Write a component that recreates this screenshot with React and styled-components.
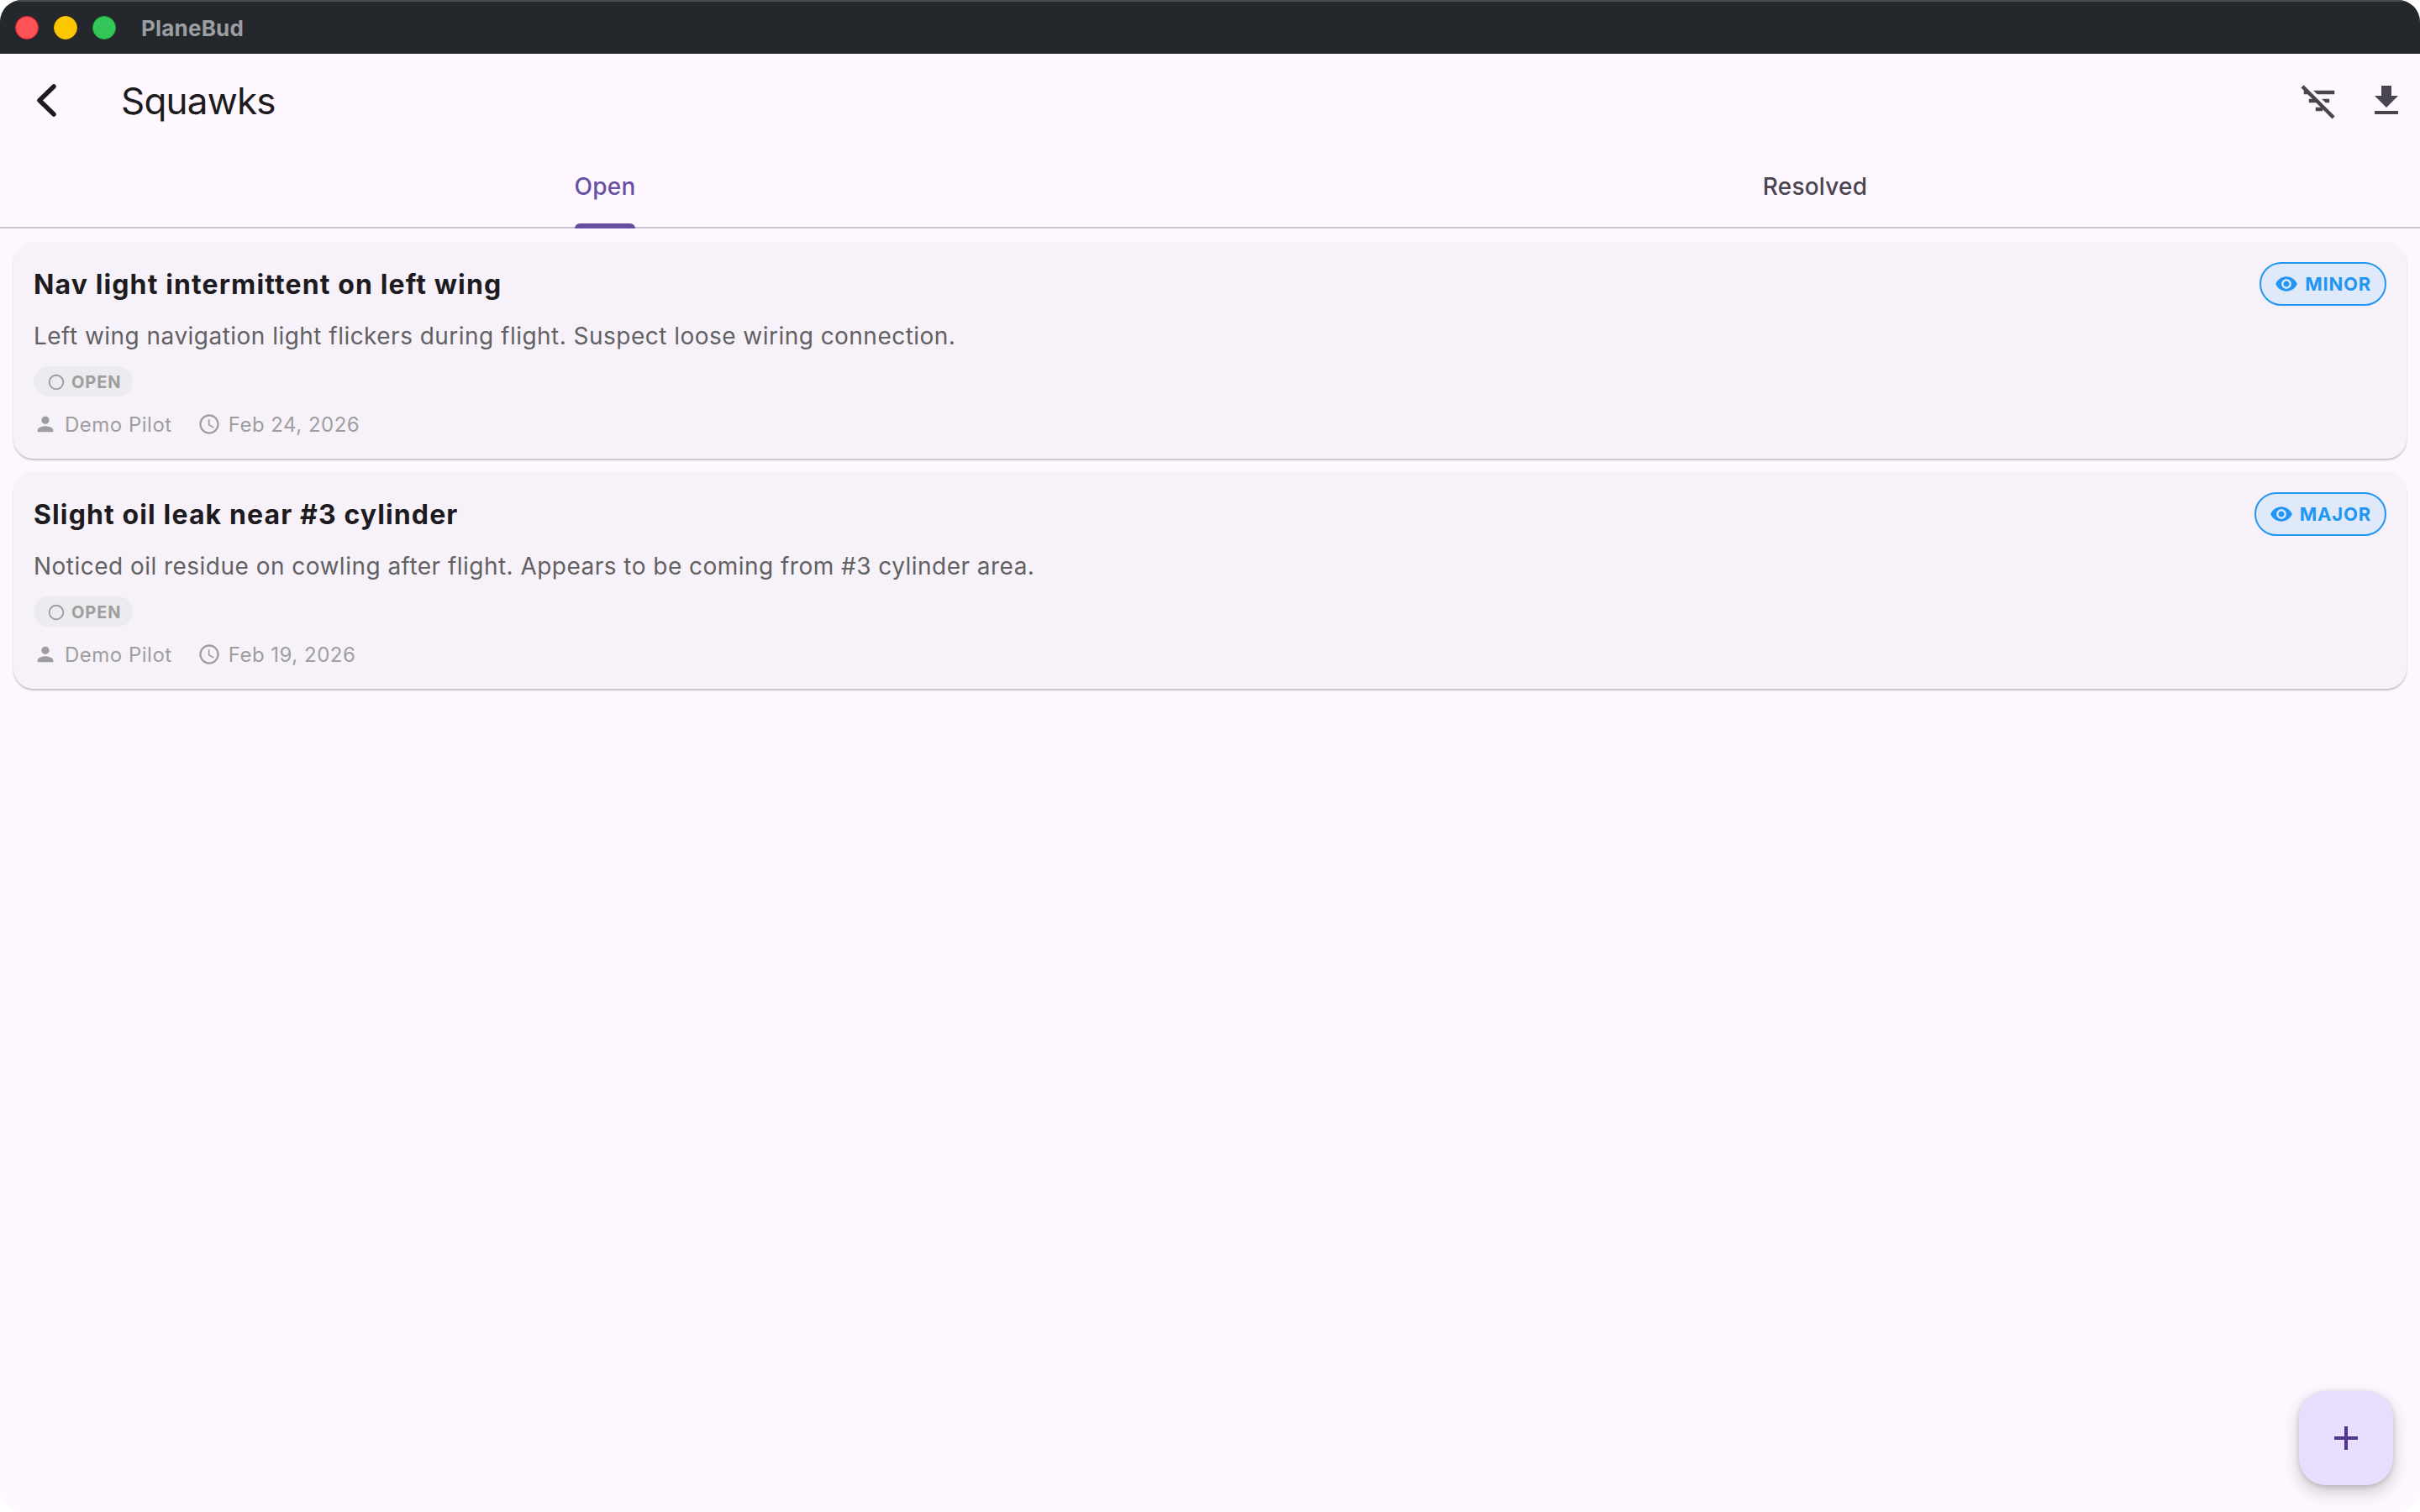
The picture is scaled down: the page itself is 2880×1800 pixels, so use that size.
import styled, { createGlobalStyle } from 'styled-components'
import {
  MdFileDownload,
  MdVisibility,
  MdPerson,
  MdAccessTime,
  MdRadioButtonUnchecked,
  MdAdd,
} from 'react-icons/md'

const squawks = [
  {
    title: 'Nav light intermittent on left wing',
    description: 'Left wing navigation light flickers during flight. Suspect loose wiring connection.',
    severity: 'MINOR',
    pilot: 'Demo Pilot',
    date: 'Feb 24, 2026',
  },
  {
    title: 'Slight oil leak near #3 cylinder',
    description: 'Noticed oil residue on cowling after flight. Appears to be coming from #3 cylinder area.',
    severity: 'MAJOR',
    pilot: 'Demo Pilot',
    date: 'Feb 19, 2026',
  },
]

const App = () => {
  return (<>
    <GlobalStyle />
    <Window>
      <TitleBar>
        <Light $color="#ff5257" $edge="#e5252c" />
        <Light $color="#fcc600" $edge="#f0bd00" />
        <Light $color="#33c75a" $edge="#1fae3f" />
        <AppName>PlaneBud</AppName>
      </TitleBar>

      <AppBar>
        <IconButton aria-label="back">
          <svg width="48" height="48" viewBox="0 0 48 48" fill="none">
            <path
              d="M32 7 15 23.5 32 40"
              stroke="#1d1b20"
              strokeWidth="5.5"
              strokeLinecap="round"
              strokeLinejoin="round" />
          </svg>
        </IconButton>
        <PageTitle>Squawks</PageTitle>
        <Actions>
          <IconButton aria-label="clear filter">
            <svg width="48" height="48" viewBox="0 0 24 24" fill="currentColor" stroke="currentColor" strokeWidth="0.25">
              <path d="M10.83 8H21V6H8.83l2 2zm5 5H18v-2h-4.17l2 2zM14 16.83V18h-4v-2h3.17l-3-3H6v-2h2.17l-3-3H3V6h.17L1.39 4.22 2.8 2.81l18.38 18.38-1.41 1.41L14 16.83z" />
            </svg>
          </IconButton>
          <IconButton aria-label="export"><MdFileDownload size={48} /></IconButton>
        </Actions>
      </AppBar>

      <Tabs>
        <Tab><TabLabel $active>Open</TabLabel></Tab>
        <Tab><TabLabel>Resolved</TabLabel></Tab>
      </Tabs>

      <List>
        {squawks.map(item => (
          <Card key={item.title}>
            <CardHeader>
              <CardTitle>{item.title}</CardTitle>
              <SeverityBadge>
                <MdVisibility size={28} />
                {item.severity}
              </SeverityBadge>
            </CardHeader>
            <Description>{item.description}</Description>
            <StatusChip>
              <MdRadioButtonUnchecked size={22} />
              OPEN
            </StatusChip>
            <Meta>
              <MetaItem><MdPerson size={28} />{item.pilot}</MetaItem>
              <MetaItem><MdAccessTime size={28} />{item.date}</MetaItem>
            </Meta>
          </Card>
        ))}
      </List>

      <Fab aria-label="add squawk"><MdAdd size={48} /></Fab>
    </Window>
  </>)
}

const GlobalStyle = createGlobalStyle`
  html, body {
    margin: 0;
    background: #fff;
  }

  * {
    box-sizing: border-box;
  }

  body {
    font-family: Inter, "Liberation Sans", sans-serif;
  }
`

const Window = styled.div`
  position: relative;
  display: flex;
  flex-direction: column;
  width: 2880px;
  height: 1800px;
  border-radius: 26px;
  overflow: hidden;
  background: #fef7ff;
`

const TitleBar = styled.div`
  display: flex;
  align-items: center;
  gap: 18px;
  height: 64px;
  padding-left: 18px;
  background: #24282c;
  border-top: 2px solid #4b4e51;
`

const Light = styled.span`
  width: 28px;
  height: 28px;
  border-radius: 50%;
  background: ${props => props.$color};
  border: 1px solid ${props => props.$edge};
`

const AppName = styled.span`
  margin-left: 12px;
  font-size: 26px;
  font-weight: 700;
  letter-spacing: 0.2px;
  color: #9a9ea3;
`

const AppBar = styled.header`
  display: flex;
  align-items: center;
  height: 112px;
  padding: 0 16px 0 32px;
`

const PageTitle = styled.h1`
  margin: 0 0 0 64px;
  font-size: 44px;
  font-weight: 400;
  letter-spacing: -0.8px;
  color: #1d1b20;
`

const Actions = styled.div`
  display: flex;
  gap: 32px;
  margin-left: auto;
`

const IconButton = styled.button`
  display: flex;
  width: 48px;
  height: 48px;
  padding: 0;
  border: none;
  background: none;
  color: #49454f;
`

const Tabs = styled.nav`
  display: grid;
  grid-template-columns: 1fr 1fr;
  height: 96px;
  border-bottom: 2px solid #cac4d0;
`

const Tab = styled.div`
  display: flex;
  justify-content: center;
  height: 96px;
`

const TabLabel = styled.span`
  position: relative;
  display: flex;
  align-items: center;
  height: 100%;
  padding-bottom: 4px;
  font-size: 28px;
  font-weight: 500;
  letter-spacing: 0.2px;
  color: ${props => props.$active ? '#6750a4' : '#49454f'};

  ${props => props.$active && `
    &::after {
      content: '';
      position: absolute;
      left: 0;
      right: 0;
      bottom: 0;
      height: 6px;
      border-radius: 6px 6px 0 0;
      background: #6750a4;
    }
  `}
`

const List = styled.main`
  display: flex;
  flex-direction: column;
  gap: 16px;
  padding: 16px;
`

const Card = styled.article`
  height: 258px;
  padding: 24px;
  border-radius: 24px;
  background: #f7f2fa;
  box-shadow: 0 2px 2px rgba(0, 0, 0, .22);
`

const CardHeader = styled.div`
  display: flex;
  justify-content: space-between;
  align-items: center;
  height: 52px;
`

const CardTitle = styled.h2`
  margin: 0;
  font-size: 32px;
  font-weight: 700;
  letter-spacing: 1.12px;
  color: #1d1b20;
`

const SeverityBadge = styled.span`
  display: flex;
  align-items: center;
  gap: 8px;
  height: 52px;
  padding: 0 16px;
  border: 2px solid #2196f3;
  border-radius: 26px;
  background: #e0e9f9;
  font-size: 22px;
  font-weight: 700;
  letter-spacing: 0.8px;
  color: #2196f3;
`

const Description = styled.p`
  margin: 16px 0 0;
  font-size: 28px;
  line-height: 40px;
  letter-spacing: 0.47px;
  color: #616161;
`

const StatusChip = styled.span`
  display: inline-flex;
  align-items: center;
  gap: 7px;
  height: 36px;
  margin-top: 16px;
  padding: 1px 14px 0 16px;
  border-radius: 18px;
  background: #ecebef;
  font-size: 20px;
  font-weight: 700;
  letter-spacing: 0.9px;
  color: #9e9e9e;
`

const Meta = styled.div`
  display: flex;
  gap: 30px;
  height: 30px;
  margin-top: 18px;
`

const MetaItem = styled.span`
  display: flex;
  align-items: center;
  gap: 9px;
  font-size: 24px;
  letter-spacing: 0.5px;
  color: #9e9e9e;
`

const Fab = styled.button`
  position: absolute;
  right: 32px;
  bottom: 32px;
  display: flex;
  justify-content: center;
  align-items: center;
  width: 112px;
  height: 112px;
  padding: 0;
  border: none;
  border-radius: 32px;
  background: #e9ddff;
  color: #4f378b;
  box-shadow: 0 8px 20px rgba(0, 0, 0, .2), 0 2px 6px rgba(0, 0, 0, .14);
`

export default App
